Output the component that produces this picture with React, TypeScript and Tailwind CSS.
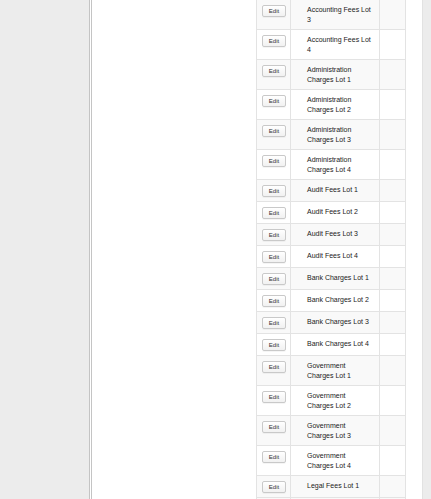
import React from "react";

const rows: string[] = [
  "Accounting Fees Lot 3",
  "Accounting Fees Lot 4",
  "Administration Charges Lot 1",
  "Administration Charges Lot 2",
  "Administration Charges Lot 3",
  "Administration Charges Lot 4",
  "Audit Fees Lot 1",
  "Audit Fees Lot 2",
  "Audit Fees Lot 3",
  "Audit Fees Lot 4",
  "Bank Charges Lot 1",
  "Bank Charges Lot 2",
  "Bank Charges Lot 3",
  "Bank Charges Lot 4",
  "Government Charges Lot 1",
  "Government Charges Lot 2",
  "Government Charges Lot 3",
  "Government Charges Lot 4",
  "Legal Fees Lot 1",
];

const App: React.FC = () => {
  return (
    <div className="w-[431px] h-[499px] overflow-hidden flex bg-[#ececec] font-['Liberation_Sans',Arial,sans-serif] text-[#1a1a1a]">
      {/* left gutter */}
      <div className="w-[89px] shrink-0" />

      {/* page panel */}
      <div className="w-[334px] shrink-0 flex bg-white border-l-[3px] border-double border-[#c4c4c4] border-r border-r-[#e2e2e2]">
        <div className="w-[164px] shrink-0" />

        <div className="w-[150px] shrink-0 flex flex-col">
          {rows.map((name, i) => (
            <div
              key={name}
              className={`flex border-b border-[#e3e3e3] ${i % 2 === 0 ? "bg-[#f9f9f9]" : "bg-white"}`}
            >
              <div className="w-[35px] shrink-0 border-l border-r border-[#e3e3e3] pl-[5px] pt-[5px] pb-[4px]">
                <button className="w-[24px] h-[12px] flex items-center justify-center rounded-[2px] border border-[#c9c9c9] bg-gradient-to-b from-white to-[#f1f1f1] text-[6px] leading-none text-[#333] shadow-[0_1px_0_rgba(0,0,0,0.04)]">
                  Edit
                </button>
              </div>
              <div className="w-[89px] shrink-0 border-r border-[#e3e3e3] pl-[16px] pr-[6px] pt-[5px] pb-[4px] text-[7px] leading-[10px]">
                {name}
              </div>
              <div className="w-[26px] shrink-0 border-r border-[#e3e3e3]" />
            </div>
          ))}
          {/* next row, cut off by the viewport */}
          <div className="flex flex-1 min-h-[22px] bg-[#f9f9f9]">
            <div className="w-[35px] shrink-0 border-l border-r border-[#e3e3e3]" />
            <div className="w-[89px] shrink-0 border-r border-[#e3e3e3]" />
            <div className="w-[26px] shrink-0 border-r border-[#e3e3e3]" />
          </div>
        </div>
      </div>

      {/* right gutter */}
      <div className="flex-1" />
    </div>
  );
};

export default App;
